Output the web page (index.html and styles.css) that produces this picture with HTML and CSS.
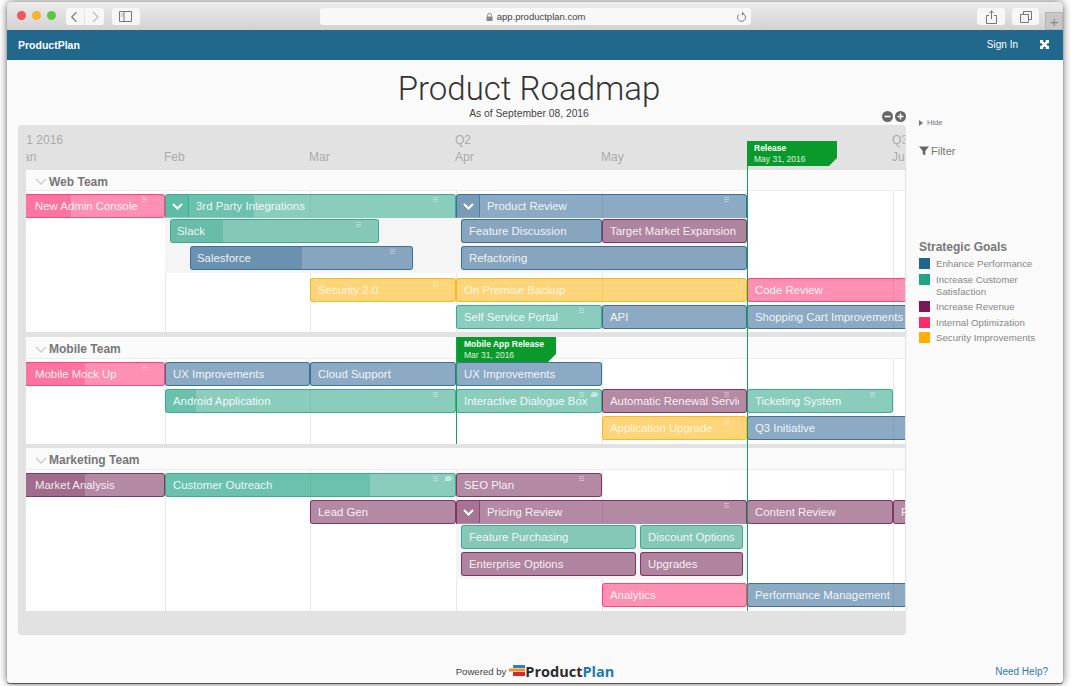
FILE: index.html
```html
<!doctype html>
<html lang="en">
<head>
    <meta charset="UTF-8">
    <title>Product Roadmap</title>
    <link rel="stylesheet" href="styles.css">
</head>
<body>
<div class="window">
    <div class="toolbar">
        <div class="lights"><i class="red"></i><i class="amber"></i><i class="green"></i></div>
        <div class="tool nav-btns">
            <svg width="19" height="16" viewBox="0 0 19 16"><path d="M11 3 6 8l5 5" fill="none" stroke="#777" stroke-width="1.2"/></svg>
            <svg width="19" height="16" viewBox="0 0 19 16"><path d="M8 3l5 5-5 5" fill="none" stroke="#bbb" stroke-width="1.2"/></svg>
        </div>
        <div class="tool side-btn">
            <svg width="13" height="11" viewBox="0 0 13 11"><path d="M.5.5h12v10H.5zM5 .5v10" fill="none" stroke="#777"/><path d="M2 3h1.500M2 5h1.500" stroke="#999"/></svg>
        </div>
        <div class="address">
            <svg width="7" height="8" viewBox="0 0 7 8"><path d="M1.500 3.500V2.400a2 2 0 0 1 4 0v1.100" fill="none" stroke="#888"/><path d="M.5 3.500h6V8h-6z" fill="#888"/></svg>
            <span>app.productplan.com</span>
            <svg class="reload" width="11" height="12" viewBox="0 0 11 12"><path d="M6.500 2.500a4 4 0 1 1-3.500.8" fill="none" stroke="#777"/><path d="M6 .5v4l2-2z" fill="#777"/></svg>
        </div>
        <div class="tool share-btn">
            <svg width="11" height="14" viewBox="0 0 11 14"><path d="M3 5.500H.5v8h10v-8H8M5.500 9V1M3.200 3 5.500.8 7.800 3" fill="none" stroke="#777"/></svg>
        </div>
        <div class="tool tabs-btn">
            <svg width="12" height="12" viewBox="0 0 12 12"><path d="M.5 3.500h8v8h-8zM3.500 3.500v-3h8v8h-3" fill="none" stroke="#777"/></svg>
        </div>
        <div class="new-tab">+</div>
    </div>

    <header class="topbar">
        <span class="brand">ProductPlan</span>
        <span class="signin">Sign In</span>
        <svg class="expand" width="9" height="9" viewBox="0 0 10 10"><path d="M0 0h4L3 1l2 2 2-2-1-1h4v4L9 3 7 5l2 2 1-1v4H6l1-1-2-2-2 2 1 1H0V6l1 1 2-2-2-2-1 1z" fill="#fff"/></svg>
    </header>

    <div class="content">
        <div class="heading">
            <h1>Product Roadmap</h1>
            <p>As of September 08, 2016</p>
        </div>

        <div class="columns">
            <main class="board">
                <div class="zoom-btns">
                    <svg width="11" height="11" viewBox="0 0 11 11"><circle cx="5.500" cy="5.500" r="5.500" fill="#666"/><path d="M2.500 5.500h6" stroke="#fff" stroke-width="1.600"/></svg>
                    <svg width="11" height="11" viewBox="0 0 11 11"><circle cx="5.500" cy="5.500" r="5.500" fill="#666"/><path d="M2.500 5.500h6M5.500 2.500v6" stroke="#fff" stroke-width="1.600"/></svg>
                </div>

                <div class="timeline">
                    <div class="tick first"><span>Q1 2016</span><span>Jan</span></div>
                    <div class="tick"><span>&nbsp;</span><span>Feb</span></div>
                    <div class="tick"><span>&nbsp;</span><span>Mar</span></div>
                    <div class="tick"><span>Q2</span><span>Apr</span></div>
                    <div class="tick"><span>&nbsp;</span><span>May</span></div>
                    <div class="tick"><span>&nbsp;</span><span>&nbsp;</span></div>
                    <div class="tick"><span>Q3</span><span>Jul</span></div>
                </div>

                <section class="team">
                    <h2 class="team-head web-head"><svg class="fold" width="12" height="7" viewBox="0 0 12 7"><path d="M1 1l5 5 5-5" fill="none" stroke="#ccc" stroke-width="1.300"/></svg>Web Team</h2>
                    <div class="lane web-lane">
                        <div class="bar opt flush s1 e2 r1"><span class="fill" style="width:45px"></span><span class="label">New Admin Console</span><i class="grip"></i></div>
                        <div class="bar cust group s2 e4 r1"><span class="fill" style="width:88px"></span><span class="chev"><svg width="11" height="7" viewBox="0 0 11 7"><path d="M1 1l4.500 4.500L10 1" fill="none" stroke="#fff" stroke-width="2"/></svg></span><span class="label">3rd Party Integrations</span><i class="grip"></i></div>
                        <div class="bar perf group s4 e6 r1"><span class="chev"><svg width="11" height="7" viewBox="0 0 11 7"><path d="M1 1l4.500 4.500L10 1" fill="none" stroke="#fff" stroke-width="2"/></svg></span><span class="label">Product Review</span><i class="grip"></i></div>

                        <div class="nest web-nest s2 e6 r2">
                            <div class="nest-col">
                                <div class="bar cust slack"><span class="fill" style="width:52px"></span><span class="label">Slack</span><i class="grip"></i></div>
                                <div class="bar perf salesforce"><span class="fill" style="width:111px"></span><span class="label">Salesforce</span><i class="grip"></i></div>
                            </div>
                            <div class="nest-col inset">
                                <div class="nest-row">
                                    <div class="bar perf feature-disc"><span class="label">Feature Discussion</span></div>
                                    <div class="bar rev grow"><span class="label">Target Market Expansion</span></div>
                                </div>
                                <div class="bar perf"><span class="label">Refactoring</span></div>
                            </div>
                        </div>

                        <div class="bar sec s3 e4 r3"><span class="label">Security 2.0</span><i class="grip"></i></div>
                        <div class="bar sec s4 e6 r3"><span class="label">On Premise Backup</span></div>
                        <div class="bar opt edge s6 e8 r3"><span class="label">Code Review</span></div>
                        <div class="bar cust s4 e5 r4"><span class="label">Self Service Portal</span><i class="grip"></i></div>
                        <div class="bar perf s5 e6 r4"><span class="label">API</span></div>
                        <div class="bar perf edge s6 e8 r4"><span class="label">Shopping Cart Improvements</span></div>
                    </div>
                </section>

                <section class="team">
                    <h2 class="team-head"><svg class="fold" width="12" height="7" viewBox="0 0 12 7"><path d="M1 1l5 5 5-5" fill="none" stroke="#ccc" stroke-width="1.300"/></svg>Mobile Team</h2>
                    <div class="lane mobile-lane">
                        <div class="bar opt flush s1 e2 r1"><span class="fill" style="width:59px"></span><span class="label">Mobile Mock Up</span><i class="grip"></i></div>
                        <div class="bar perf s2 e3 r1"><span class="label">UX Improvements</span></div>
                        <div class="bar perf s3 e4 r1"><span class="label">Cloud Support</span></div>
                        <div class="bar perf s4 e5 r1"><span class="label">UX Improvements</span></div>
                        <div class="bar cust s2 e4 r2"><span class="fill" style="width:30px"></span><span class="label">Android Application</span><i class="grip"></i></div>
                        <div class="bar cust s4 e5 r2"><span class="label">Interactive Dialogue Box</span><i class="grip"></i><i class="note"></i></div>
                        <div class="bar rev s5 e6 r2"><span class="label">Automatic Renewal Service</span><i class="grip"></i></div>
                        <div class="bar cust s6 e7 r2"><span class="label">Ticketing System</span><i class="grip"></i></div>
                        <div class="bar sec s5 e6 r3"><span class="label">Application Upgrade</span><i class="grip"></i></div>
                        <div class="bar perf edge s6 e8 r3"><span class="label">Q3 Initiative</span></div>
                    </div>
                </section>

                <section class="team">
                    <h2 class="team-head"><svg class="fold" width="12" height="7" viewBox="0 0 12 7"><path d="M1 1l5 5 5-5" fill="none" stroke="#ccc" stroke-width="1.300"/></svg>Marketing Team</h2>
                    <div class="lane marketing-lane">
                        <div class="bar rev flush s1 e2 r1"><span class="fill" style="width:59px"></span><span class="label">Market Analysis</span></div>
                        <div class="bar cust s2 e4 r1"><span class="fill" style="width:204px"></span><span class="label">Customer Outreach</span><i class="grip"></i><i class="note"></i></div>
                        <div class="bar rev s4 e5 r1"><span class="label">SEO Plan</span><i class="grip"></i></div>
                        <div class="bar rev s3 e4 r2"><span class="label">Lead Gen</span></div>
                        <div class="bar rev group s4 e6 r2"><span class="chev"><svg width="11" height="7" viewBox="0 0 11 7"><path d="M1 1l4.500 4.500L10 1" fill="none" stroke="#fff" stroke-width="2"/></svg></span><span class="label">Pricing Review</span><i class="grip"></i></div>
                        <div class="bar rev s6 e7 r2"><span class="label">Content Review</span></div>
                        <div class="bar rev edge s7 e8 r2"><span class="label">Pricing</span></div>

                        <div class="nest market-nest s4 e6 r3">
                            <div class="nest-col inset">
                                <div class="nest-row spaced">
                                    <div class="bar cust feature-purch"><span class="label">Feature Purchasing</span></div>
                                    <div class="bar cust grow"><span class="label">Discount Options</span></div>
                                </div>
                                <div class="nest-row spaced">
                                    <div class="bar rev feature-purch"><span class="label">Enterprise Options</span></div>
                                    <div class="bar rev grow"><span class="label">Upgrades</span></div>
                                </div>
                            </div>
                        </div>

                        <div class="bar opt s5 e6 r4"><span class="label">Analytics</span></div>
                        <div class="bar perf edge s6 e8 r4"><span class="label">Performance Management</span></div>
                    </div>
                </section>

                <div class="milestone-line release-line"></div>
                <div class="flag release-flag"><b>Release</b><span>May 31, 2016</span></div>
                <div class="milestone-line mobile-line"></div>
                <div class="flag mobile-flag"><b>Mobile App Release</b><span>Mar 31, 2016</span></div>
            </main>

            <aside class="side">
                <div class="hide"><i class="arrow"></i>Hide</div>
                <div class="filter">
                    <svg width="10" height="10" viewBox="0 0 10 10"><path d="M0 .5h10L6.300 5v4.500L3.700 8V5z" fill="#666"/></svg>
                    Filter
                </div>
                <h3>Strategic Goals</h3>
                <ul class="legend">
                    <li><i class="swatch perf"></i>Enhance Performance</li>
                    <li><i class="swatch cust"></i>Increase Customer Satisfaction</li>
                    <li><i class="swatch rev"></i>Increase Revenue</li>
                    <li><i class="swatch opt"></i>Internal Optimization</li>
                    <li><i class="swatch sec"></i>Security Improvements</li>
                </ul>
            </aside>
        </div>
    </div>

    <footer class="foot">
        <span></span>
        <div class="powered">
            <span>Powered by</span>
            <svg width="17" height="12" viewBox="0 0 17 12"><path d="M4 0h12v3H4z" fill="#2b7fc3"/><path d="M0 3.500h16v3H0z" fill="#f0902a"/><path d="M4 7h12v4H4z" fill="#d9262c"/></svg>
            <span class="logo-text">Product<em>Plan</em></span>
        </div>
        <a class="help" href="#">Need Help?</a>
    </footer>
</div>
</body>
</html>
```

FILE: styles.css
```css
* {
    box-sizing: border-box;
}

html, body {
    height: 100%;
}

body {
    margin: 0;
    padding: 2px 8px 3px 7px;
    background: #fff;
    overflow: hidden;
    font-family: 'Liberation Sans', Arial, sans-serif;
}

.window {
    height: 681px;
    display: flex;
    flex-direction: column;
    background: #fafafa;
    border-radius: 5px 5px 3px 3px;
    box-shadow: 0 0 8px rgba(0, 0, 0, .6), 0 1px 1px rgba(0, 0, 0, .6);
    overflow: hidden;
}

/* browser chrome */
.toolbar {
    height: 28px;
    flex: none;
    display: flex;
    align-items: flex-start;
    padding: 6px 0 0 10px;
    background: linear-gradient(#ececec, #d2d2d2);
}

.lights {
    display: flex;
    gap: 6px;
    margin-top: 3px;
}

.lights i {
    width: 9px;
    height: 9px;
    border-radius: 50%;
}

.red { background: #f0565a; }
.amber { background: #f7b52d; }
.green { background: #5cc548; }

.tool {
    height: 17px;
    display: flex;
    align-items: center;
    justify-content: center;
    background: #f7f7f7;
    border-radius: 3px;
}

.nav-btns {
    width: 38px;
    margin-left: 10px;
}

.nav-btns svg:first-child {
    border-right: 1px solid #e2e2e2;
}

.side-btn {
    width: 28px;
    margin-left: 8px;
}

.address {
    width: 432px;
    height: 17px;
    margin-left: 180px;
    display: flex;
    align-items: center;
    justify-content: center;
    gap: 4px;
    position: relative;
    background: #f8f8f8;
    border-radius: 3px;
    font-size: 9.500px;
    color: #444;
}

.reload {
    position: absolute;
    right: 4px;
    top: 3px;
}

.share-btn {
    width: 28px;
    margin-left: 226px;
}

.tabs-btn {
    width: 27px;
    margin-left: 7px;
}

.new-tab {
    width: 18px;
    height: 18px;
    margin: 4px 0 0 6px;
    background: #c6c6c6;
    border: 1px solid #b4b4b4;
    color: #888;
    font-size: 15px;
    line-height: 17px;
    text-align: center;
}

.topbar {
    height: 30px;
    flex: none;
    display: flex;
    align-items: center;
    padding: 0 14px 1px 11px;
    background: #22678c;
    color: #fff;
    font-size: 10.500px;
}

.brand {
    font-weight: bold;
}

.signin {
    margin-left: auto;
    font-size: 10px;
}

.expand {
    margin-left: 22px;
}

/* page */
.content {
    flex: 1;
    padding: 0 23px 0 11px;
}

.heading {
    text-align: center;
    padding-top: 9px;
    height: 65px;
}

.heading h1 {
    margin: 0;
    font-family: Roboto, 'Liberation Sans', sans-serif;
    font-weight: 300;
    font-size: 33px;
    line-height: 40px;
    color: #333;
}

.heading p {
    margin: -2px 0 0;
    font-size: 10.300px;
    line-height: 14px;
    color: #444;
}

.columns {
    display: flex;
}

.board {
    position: relative;
    width: 888px;
    height: 509px;
    flex: none;
    padding: 0 1px 0 8px;
    background: #e2e2e2;
    border-radius: 4px;
    box-shadow: 0 1px 1px rgba(0, 0, 0, .12);
}

.zoom-btns {
    position: absolute;
    right: 0;
    top: -14px;
    display: flex;
    gap: 2px;
}

.zoom-btns svg {
    display: block;
}

.timeline,
.lane {
    display: grid;
    grid-template-columns: 139px 145px 146px 146px 145px 146px 12px;
}

.timeline {
    height: 45px;
    padding-top: 7px;
    overflow: hidden;
    font-size: 12px;
    line-height: 16px;
    color: #aaa;
}

.tick {
    margin-left: -1px;
    white-space: nowrap;
}

.tick span {
    display: block;
}

.tick span + span {
    margin-top: 1px;
}

.tick.first {
    margin-left: -9px;
}

.team + .team {
    margin-top: 5px;
}

.team + .team + .team {
    margin-top: 4px;
}

.team-head {
    height: 22px;
    margin: 0;
    display: flex;
    align-items: center;
    padding: 3px 0 0 9px;
    background: #fafafa;
    border-bottom: 1px solid #ededed;
    font-size: 12px;
    color: #777;
}

.web-head {
    height: 21px;
}

.fold {
    margin-right: 2px;
}

.lane {
    padding-top: 3px;
    background-color: #fff;
    background-image:
        linear-gradient(#e8e8e8, #e8e8e8),
        linear-gradient(#e8e8e8, #e8e8e8),
        linear-gradient(#e8e8e8, #e8e8e8),
        linear-gradient(#e8e8e8, #e8e8e8),
        linear-gradient(#e8e8e8, #e8e8e8);
    background-size: 1px 100%;
    background-repeat: no-repeat;
    background-position: 139px 0, 284px 0, 430px 0, 576px 0, 867px 0;
}

.web-lane {
    height: 141px;
    grid-template-rows: 24px 60px 27px 24px;
}

.mobile-lane {
    height: 85px;
    grid-template-rows: 27px 27px 24px;
}

.marketing-lane {
    height: 141px;
    grid-template-rows: 27px 24px 59px 24px;
}

.s1 { grid-column-start: 1; }
.s2 { grid-column-start: 2; }
.s3 { grid-column-start: 3; }
.s4 { grid-column-start: 4; }
.s5 { grid-column-start: 5; }
.s6 { grid-column-start: 6; }
.s7 { grid-column-start: 7; }
.e2 { grid-column-end: 2; }
.e3 { grid-column-end: 3; }
.e4 { grid-column-end: 4; }
.e5 { grid-column-end: 5; }
.e6 { grid-column-end: 6; }
.e7 { grid-column-end: 7; }
.e8 { grid-column-end: 8; }
.r1 { grid-row: 1; }
.r2 { grid-row: 2; }
.r3 { grid-row: 3; }
.r4 { grid-row: 4; }

/* bars */
.perf { --c: 35, 92, 140; }
.cust { --c: 31, 160, 128; }
.rev { --c: 112, 28, 78; }
.opt { --c: 251, 43, 109; }
.sec { --c: 253, 174, 0; }

.bar {
    position: relative;
    height: 24px;
    align-self: start;
    display: flex;
    align-items: center;
    padding: 0 7px;
    background: rgba(var(--c), .52);
    border: 1px solid rgba(var(--c), .75);
    border-radius: 3px;
    color: rgba(255, 255, 255, .9);
    font-size: 11.400px;
    white-space: nowrap;
    overflow: hidden;
}

.sec {
    color: #fff6dc;
}

.flush {
    border-radius: 0 3px 3px 0;
    border-left: 0;
    padding-left: 9px;
}

.edge {
    border-right: 0;
    border-radius: 3px 0 0 3px;
    padding-right: 0;
}

.group {
    padding-left: 0;
    border-radius: 3px 3px 0 0;
    border-bottom-color: transparent;
}

.fill {
    position: absolute;
    left: 0;
    top: 0;
    bottom: 0;
    background: rgba(var(--c), .28);
}

.label {
    position: relative;
    flex: 1;
    min-width: 0;
    overflow: hidden;
}

.chev {
    position: relative;
    width: 23px;
    height: 22px;
    flex: none;
    display: flex;
    align-items: center;
    justify-content: center;
    margin-right: 7px;
    background: rgba(var(--c), .18);
    border-right: 1px solid rgba(var(--c), .5);
}

.grip {
    position: absolute;
    top: 2px;
    right: 17px;
    width: 5px;
    height: 5px;
    background: repeating-linear-gradient(rgba(255, 255, 255, .38) 0 1px, transparent 1px 2px);
}

.note {
    position: absolute;
    top: 2px;
    right: 3px;
    width: 7px;
    height: 5px;
    border-radius: 50% 50% 50% 0;
    background: rgba(255, 255, 255, .5);
}

/* sub items of a container */
.nest {
    height: 55px;
    display: flex;
    background: #f5f5f5;
}

.nest-col {
    width: 291px;
    flex: none;
    display: flex;
    flex-direction: column;
    gap: 3px;
    padding-top: 1px;
}

.nest-col .bar {
    align-self: stretch;
}

.nest-col > .slack,
.nest-col > .salesforce {
    align-self: flex-start;
    padding-left: 6px;
}

.nest-col.inset {
    padding-left: 5px;
}

.nest-row {
    display: flex;
}

.nest-row.spaced {
    gap: 4px;
    padding-right: 4px;
}

.grow {
    flex: 1;
    min-width: 0;
}

.slack {
    width: 209px;
    margin-left: 5px;
}

.salesforce {
    width: 223px;
    margin-left: 25px;
}

.feature-disc {
    width: 141px;
    flex: none;
}

.feature-purch {
    width: 175px;
    flex: none;
}

/* milestones */
.milestone-line {
    position: absolute;
    width: 1px;
    background: #17a05c;
}

.release-line {
    left: 729px;
    top: 16px;
    height: 470px;
}

.mobile-line {
    left: 438px;
    top: 212px;
    height: 107px;
}

.flag {
    position: absolute;
    height: 25px;
    padding: 2px 0 0 7px;
    background: #0a9a2c;
    color: #fff;
    font-size: 8.500px;
    line-height: 11px;
    clip-path: polygon(0 0, 100% 0, 100% calc(100% - 8px), calc(100% - 8px) 100%, 0 100%);
}

.flag b,
.flag span {
    display: block;
}

.flag span {
    opacity: .85;
}

.release-flag {
    left: 729px;
    top: 16px;
    width: 90px;
}

.mobile-flag {
    left: 439px;
    top: 212px;
    width: 99px;
}

/* right column */
.side {
    flex: 1;
    padding: 0 0 0 13px;
    margin-top: -8px;
    color: #888;
}

.hide {
    height: 11px;
    display: flex;
    align-items: center;
    gap: 4px;
    font-size: 7.500px;
    color: #777;
}

.arrow {
    width: 0;
    height: 0;
    border-style: solid;
    border-width: 3px 0 3px 4px;
    border-color: transparent transparent transparent #777;
}

.filter {
    display: flex;
    align-items: center;
    gap: 2px;
    margin-top: 16px;
    height: 14px;
    font-size: 11px;
    color: #777;
}

.side h3 {
    margin: 82px 0 0;
    font-size: 12px;
    line-height: 14px;
    color: #777;
}

.legend {
    list-style: none;
    margin: 4px 0 0;
    padding: 0;
    font-size: 9.700px;
    line-height: 12px;
}

.legend li {
    position: relative;
    padding: 0 0 3.500px 17px;
    width: 120px;
}

.swatch {
    position: absolute;
    left: 0;
    top: 0;
    width: 11px;
    height: 11px;
    background: rgb(var(--c));
}

.swatch.perf { background: #1f6590; }
.swatch.cust { background: #1fa583; }
.swatch.rev { background: #7a1a52; }

.foot {
    height: 24px;
    flex: none;
    display: grid;
    grid-template-columns: 1fr auto 1fr;
    align-items: center;
    padding: 0 15px;
    font-size: 9.600px;
    color: #444;
}

.powered {
    display: flex;
    align-items: center;
    gap: 3px;
}

.logo-text {
    font-family: 'Open Sans', sans-serif;
    font-weight: 700;
    font-size: 14.500px;
    color: #2b2b2b;
    margin-left: -4px;
}

.logo-text em {
    font-style: normal;
    color: #1c78b8;
}

.help {
    justify-self: end;
    font-size: 10px;
    color: #2a7ab0;
    text-decoration: none;
}
```
